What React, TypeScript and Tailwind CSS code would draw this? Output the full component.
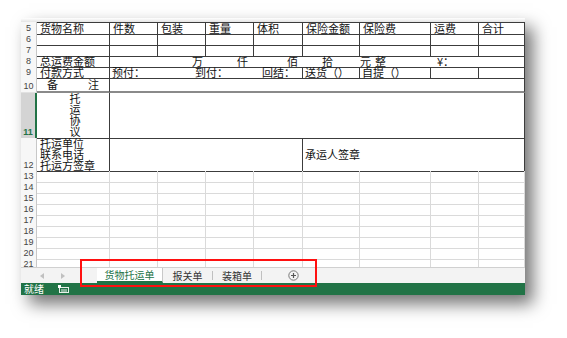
import type { ReactNode } from 'react';

const COLS = 'grid grid-cols-[16px_73px_48px_48px_48px_49px_57px_71px_48px_46px]';
const CJK = "font-['Noto_Sans_CJK_SC','Noto_Sans',sans-serif]";

function RowHead({ n, selected = false }: { n: number; selected?: boolean }) {
  return (
    <div
      className={`flex items-end justify-center pb-[1px] text-[9px] leading-[10px] font-['Liberation_Sans',sans-serif] border-b border-[#e1e1e1] ${
        selected
          ? 'bg-[#d4d4d4] text-[#217346] font-bold border-r-2 border-r-[#217346]'
          : 'bg-[#f7f7f7] text-[#444] border-r border-r-[#c8c8c8]'
      }`}
    >
      {n}
    </div>
  );
}

function Cell({ children, className = '' }: { children?: ReactNode; className?: string }) {
  return (
    <div className={`flex items-center whitespace-nowrap border-b border-[#3c3c3c] text-[11px] leading-[11px] text-[#111] ${className}`}>
      {children}
    </div>
  );
}

const HEAD = ['货物名称', '件数', '包装', '重量', '体积', '保险金额', '保险费', '运费', '合计'];

export default function App() {
  return (
    <div className={`w-[567px] h-[338px] bg-white relative overflow-hidden ${CJK}`}>
      <div className="pt-[18px] pl-[21px]">
        <div className="w-[504px] bg-white shadow-[8px_9px_16px_rgba(0,0,0,0.55)]">
          <div className="h-[4px] bg-gradient-to-b from-white to-[#e4e4e4]" />
          <div className="h-[245px] overflow-hidden">
            {/* row 5 */}
            <div className={`${COLS} h-[12px]`}>
              <RowHead n={5} />
              {HEAD.map((t) => (
                <Cell key={t} className="border-t border-r border-t-[#3c3c3c] border-r-[#3c3c3c] pl-[3px]">
                  {t}
                </Cell>
              ))}
            </div>
            {[6, 7].map((n) => (
              <div key={n} className={`${COLS} h-[11px]`}>
                <RowHead n={n} />
                {HEAD.map((t) => (
                  <Cell key={t} className="border-r border-r-[#3c3c3c]" />
                ))}
              </div>
            ))}
            {/* row 8 */}
            <div className={`${COLS} h-[11px]`}>
              <RowHead n={8} />
              <Cell className="border-r border-r-[#3c3c3c] pl-[3px]">总运费金额</Cell>
              <Cell />
              <Cell className="justify-end pr-[3px]">万</Cell>
              <Cell className="justify-end pr-[6px]">仟</Cell>
              <Cell className="justify-end pr-[5px]">佰</Cell>
              <Cell className="justify-end pr-[27px]">拾</Cell>
              <Cell className="gap-[4px]">
                <span>元</span>
                <span>整</span>
              </Cell>
              <Cell className="pl-[6px] text-[9px]">¥：</Cell>
              <Cell className="border-r border-r-[#3c3c3c]" />
            </div>
            {/* row 9 */}
            <div className={`${COLS} h-[10px]`}>
              <RowHead n={9} />
              <Cell className="border-r border-r-[#3c3c3c] pl-[3px]">付款方式</Cell>
              <Cell className="col-span-4 border-r border-r-[#3c3c3c] pl-[2px]">
                <span className="w-[83px]">预付：</span>
                <span className="w-[67px]">到付：</span>
                <span>回结：</span>
              </Cell>
              <Cell className="border-r border-r-[#3c3c3c] pl-[2px]">送货（）</Cell>
              <Cell className="border-r border-r-[#3c3c3c] pl-[2px]">自提（）</Cell>
              <Cell className="border-r border-r-[#3c3c3c]" />
              <Cell className="border-r border-r-[#3c3c3c]" />
            </div>
            {/* row 10 */}
            <div className={`${COLS} h-[16px]`}>
              <RowHead n={10} />
              <Cell className="border-r border-r-[#3c3c3c] justify-between pl-[10px] pr-[10px] border-b-[#8a8a8a] border-b-2">
                <span>备</span>
                <span>注</span>
              </Cell>
              <Cell className="col-span-8 border-r border-r-[#3c3c3c] border-b-[#8a8a8a] border-b-2" />
            </div>
            {/* row 11 */}
            <div className={`${COLS} h-[45px]`}>
              <RowHead n={11} selected />
              <Cell className="border-r border-r-[#3c3c3c] flex-col justify-end pb-[1px] pl-[4px] leading-[11px]">
                <span>托</span>
                <span>运</span>
                <span>协</span>
                <span>议</span>
              </Cell>
              <Cell className="col-span-8 border-r border-r-[#3c3c3c]" />
            </div>
            {/* row 12 */}
            <div className={`${COLS} h-[33px]`}>
              <RowHead n={12} />
              <Cell className="border-r border-r-[#3c3c3c] flex-col items-start justify-end pl-[3px] leading-[11px]">
                <span>托运单位</span>
                <span>联系电话</span>
                <span>托运方签章</span>
              </Cell>
              <Cell className="col-span-4 border-r border-r-[#3c3c3c]" />
              <Cell className="col-span-4 border-r border-r-[#3c3c3c] pl-[2px] text-[10px]">承运人签章</Cell>
            </div>
            {[13, 14, 15, 16, 17, 18, 19, 20, 21].map((n) => (
              <div key={n} className={`${COLS} h-[11px]`}>
                <RowHead n={n} />
                {HEAD.map((t) => (
                  <div key={t} className="border-r border-b border-[#dadada]" />
                ))}
              </div>
            ))}
          </div>
          {/* sheet tabs */}
          <div className="h-[16px] bg-[#f3f3f3] border-t border-[#d0d0d0] flex items-stretch text-[10px] leading-[10px]">
            <div className="w-[76px] flex items-center gap-[17px] pl-[19px]">
              <svg width="4" height="6" viewBox="0 0 4 6">
                <polygon points="4,0 0,3 4,6" fill="#c0c0c0" />
              </svg>
              <svg width="4" height="6" viewBox="0 0 4 6">
                <polygon points="0,0 4,3 0,6" fill="#c0c0c0" />
              </svg>
            </div>
            <div className="w-[66px] bg-white flex items-center justify-center text-[#217346] border-b-2 border-[#217346] border-r border-r-[#c8c8c8]">
              货物托运单
            </div>
            <div className="w-[49px] flex items-center justify-center text-[#333]">报关单</div>
            <div className="w-px my-[3px] bg-[#c0c0c0]" />
            <div className="w-[48px] flex items-center justify-center text-[#333]">装箱单</div>
            <div className="w-px my-[3px] bg-[#c0c0c0]" />
            <div className="w-[63px] flex items-center justify-center">
              <svg width="11" height="11" viewBox="0 0 11 11">
                <circle cx="5.5" cy="5.5" r="4.7" fill="none" stroke="#777" strokeWidth="1" />
                <path d="M5.5 3v5M3 5.5h5" stroke="#555" strokeWidth="1.2" />
              </svg>
            </div>
          </div>
          {/* status bar */}
          <div className="h-[12px] bg-[#217346] flex items-center text-white text-[10px] leading-[10px] pl-[3px]">
            <span className="w-[34px]">就绪</span>
            <svg width="12" height="8" viewBox="0 0 12 8">
              <rect x="1.5" y="2.5" width="9" height="5" fill="none" stroke="#e8f0ea" strokeWidth="1" />
              <rect x="0" y="0" width="3" height="3" fill="#ffffff" />
              <path d="M4 4v3M6 4v3M8 4v3" stroke="#e8f0ea" strokeWidth="1" />
            </svg>
          </div>
        </div>
      </div>
      {/* red highlight */}
      <div className="absolute left-[80px] top-[259px] w-[237px] h-[28px] border-2 border-[#ff1010]" />
    </div>
  );
}
